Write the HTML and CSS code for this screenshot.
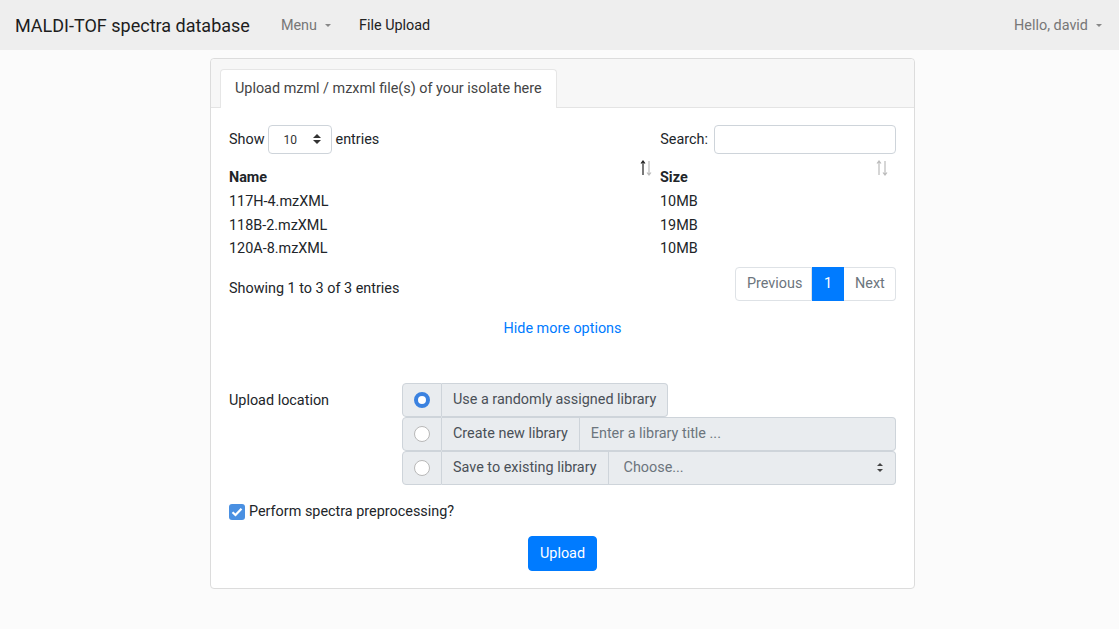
FILE: index.html
```html
<!DOCTYPE html>
<html lang="en">
<head>
<meta charset="utf-8">
<title>MALDI-TOF spectra database</title>
<link rel="stylesheet" href="styles.css">
</head>
<body>
<nav class="navbar">
  <a class="brand" href="#">MALDI-TOF spectra database</a>
  <ul class="nav-links">
    <li><a class="nav-link dropdown" href="#">Menu<span class="caret"></span></a></li>
    <li><a class="nav-link active" href="#">File Upload</a></li>
  </ul>
  <a class="nav-link dropdown user" href="#">Hello, david<span class="caret"></span></a>
</nav>

<main class="main">
  <div class="card">
    <div class="card-header">
      <div class="tab">Upload mzml / mzxml file(s) of your isolate here</div>
    </div>
    <div class="card-body">
      <div class="dt-top">
        <label class="length">Show
          <span class="select-sm">10<span class="updown"></span></span>
          entries</label>
        <label class="search">Search: <span class="search-input"></span></label>
      </div>
      <table class="dt">
        <thead>
          <tr>
            <th class="col-name">Name
              <svg class="sort" width="12" height="16" viewBox="0 0 12 16"><path d="M3 1 L3 15 M1 3.5 L3 1 L5 3.5" stroke="#222" stroke-width="1.2" fill="none"/><path d="M9 1 L9 15 M7 12.5 L9 15 L11 12.5" stroke="#bbb" stroke-width="1.2" fill="none"/></svg>
            </th>
            <th class="col-size">Size
              <svg class="sort" width="12" height="16" viewBox="0 0 12 16"><path d="M3 1 L3 15 M1 3.5 L3 1 L5 3.5" stroke="#bbb" stroke-width="1.2" fill="none"/><path d="M9 1 L9 15 M7 12.5 L9 15 L11 12.5" stroke="#bbb" stroke-width="1.2" fill="none"/></svg>
            </th>
          </tr>
        </thead>
        <tbody>
          <tr><td>117H-4.mzXML</td><td>10MB</td></tr>
          <tr><td>118B-2.mzXML</td><td>19MB</td></tr>
          <tr><td>120A-8.mzXML</td><td>10MB</td></tr>
        </tbody>
      </table>
      <div class="dt-bottom">
        <div class="info">Showing 1 to 3 of 3 entries</div>
        <ul class="pagination">
          <li class="page prev">Previous</li>
          <li class="page active">1</li>
          <li class="page next">Next</li>
        </ul>
      </div>
      <div class="more"><a href="#">Hide more options</a></div>

      <div class="form-row">
        <div class="form-label">Upload location</div>
        <div class="groups">
          <div class="input-group short">
            <span class="addon radio-addon"><span class="radio checked"></span></span>
            <span class="addon text">Use a randomly assigned library</span>
          </div>
          <div class="input-group">
            <span class="addon radio-addon"><span class="radio"></span></span>
            <span class="addon text">Create new library</span>
            <span class="field placeholder">Enter a library title ...</span>
          </div>
          <div class="input-group">
            <span class="addon radio-addon"><span class="radio"></span></span>
            <span class="addon text">Save to existing library</span>
            <span class="field select placeholder">Choose...<span class="updown"></span></span>
          </div>
        </div>
      </div>

      <label class="check"><span class="checkbox"><svg width="12" height="10" viewBox="0 0 12 10"><path d="M1.5 5.2 L4.5 8 L10.5 1.8" stroke="#fff" stroke-width="2.2" fill="none"/></svg></span>Perform spectra preprocessing?</label>

      <div class="actions"><button class="btn" type="button">Upload</button></div>
    </div>
  </div>
</main>
</body>
</html>
```

FILE: styles.css
```css
* { box-sizing: border-box; }
html, body { margin: 0; padding: 0; }
body {
  font-family: Roboto, "Liberation Sans", Arial, sans-serif;
  font-size: 14.4px;
  color: #212529;
  background: #fbfbfb;
  min-height: 629px;
}
a { text-decoration: none; }

/* navbar */
.navbar {
  height: 50px;
  background: #eeeeee;
  display: flex;
  align-items: center;
  padding: 0 15px;
}
.brand {
  font-size: 18px;
  color: #1d1d1d;
  margin-right: 23px;
}
.nav-links {
  list-style: none;
  margin: 0;
  padding: 0;
  display: flex;
  flex: 1;
}
.nav-link {
  display: inline-flex;
  align-items: center;
  padding: 8px;
  color: #777;
  font-size: 14.4px;
}
.nav-links li + li .nav-link { margin-left: 12px; }
.nav-link.active { color: #222; }
.caret {
  display: inline-block;
  width: 0; height: 0;
  margin-left: 8px;
  border-top: 3.5px solid #888;
  border-left: 3.5px solid transparent;
  border-right: 3.5px solid transparent;
  margin-top: 1px;
}
.user { padding-right: 2px; }

/* card */
.main {
  width: 705px;
  margin: 8px 0 0 210px;
}
.card {
  background: #fff;
  border: 1px solid #dcdcdc;
  border-radius: 4px;
}
.card-header {
  background: #f7f7f7;
  border-bottom: 1px solid #e4e4e4;
  padding: 10px 9px 0;
  border-radius: 4px 4px 0 0;
  display: flex;
}
.tab {
  background: #fff;
  border: 1px solid #e6e6e6;
  border-bottom: none;
  border-radius: 4px 4px 0 0;
  padding: 0 14px;
  height: 39px;
  line-height: 37px;
  color: #444;
  margin-bottom: -1px;
}
.card-body {
  padding: 17px 18px 17px 18px;
}

/* datatable top */
.dt-top {
  display: flex;
  justify-content: space-between;
  align-items: center;
  height: 28px;
}
.length, .search {
  display: flex;
  align-items: center;
  color: #212529;
}
.select-sm {
  position: relative;
  display: inline-block;
  width: 64px;
  height: 29px;
  margin: 0 4px 0 3px;
  border: 1px solid #ced4da;
  border-radius: 4px;
  font-size: 12px;
  line-height: 29px;
  padding-left: 15px;
  color: #333;
}
.updown {
  position: absolute;
  right: 10px;
  top: 50%;
  width: 8px;
  height: 10px;
  margin-top: -5px;
}
.updown::before, .updown::after {
  content: "";
  position: absolute;
  left: 0;
  border-left: 4px solid transparent;
  border-right: 4px solid transparent;
}
.updown::before { top: 0; border-bottom: 4px solid #333; }
.updown::after { bottom: 0; border-top: 4px solid #333; }
.search-input {
  display: inline-block;
  width: 182px;
  height: 29px;
  border: 1px solid #ced4da;
  border-radius: 4px;
  margin-left: 6px;
}

/* table */
.dt {
  width: 100%;
  border-collapse: collapse;
  margin-top: 4px;
}
.dt th {
  position: relative;
  text-align: left;
  font-weight: 700;
  padding: 10px 0 1px;
  line-height: 22px;
}
.col-name { width: 431px; }
.dt .sort {
  position: absolute;
  top: 3px;
  right: 8px;
}
.dt td {
  padding: 0;
  height: 23.5px;
  line-height: 23.5px;
}

.dt-bottom {
  display: flex;
  justify-content: space-between;
  align-items: center;
  margin-top: 6px;
}
.info { margin-top: 9px; }
.pagination {
  list-style: none;
  margin: 0;
  padding: 0;
  display: flex;
}
.page {
  height: 34px;
  line-height: 32px;
  border: 1px solid #dee2e6;
  padding: 0 11px;
  color: #6c757d;
  background: #fff;
}
.page.prev { border-radius: 4px 0 0 4px; width: 77px; }
.page.active {
  background: #007bff;
  border-color: #007bff;
  color: #fff;
  width: 32px;
  text-align: center;
  padding: 0;
}
.page.next { border-left: none; border-radius: 0 4px 4px 0; width: 52px; color: #6c757d; }

.more {
  text-align: center;
  margin-top: 17px;
  line-height: 22px;
}
.more a { color: #007bff; }

/* upload location */
.form-row {
  display: grid;
  grid-template-columns: 173px 1fr;
  margin-top: 43px;
}
.form-label {
  height: 34px;
  line-height: 36px;
}
.groups {
  display: flex;
  flex-direction: column;
}
.input-group {
  display: flex;
  height: 34px;
}
.input-group.short { align-self: flex-start; }
.addon, .field {
  background: #e9ecef;
  border: 1px solid #ced4da;
  color: #495057;
  display: flex;
  align-items: center;
  padding: 0 11px;
  white-space: nowrap;
}
.addon + .addon, .addon + .field { border-left: none; }
.radio-addon {
  width: 40px;
  justify-content: center;
  padding: 0;
  border-radius: 4px 0 0 4px;
}
.input-group.short .text { border-radius: 0 4px 4px 0; }
.field {
  flex: 1;
  border-radius: 0 4px 4px 0;
  position: relative;
}
.placeholder { color: #6c757d; }
.select { padding-left: 15px; }
.select .updown { right: 11px; width: 7px; height: 9px; margin-top: -4.5px; }
.select .updown::before { border-left-width: 3.5px; border-right-width: 3.5px; border-bottom: 3.5px solid #444; }
.select .updown::after { border-left-width: 3.5px; border-right-width: 3.5px; border-top: 3.5px solid #444; }
.radio {
  width: 16px;
  height: 16px;
  border-radius: 50%;
  border: 1px solid #b8b8b8;
  background: #fff;
  display: inline-block;
}
.radio.checked {
  border: 4.5px solid #3b82e0;
  background: #fff;
}

/* checkbox */
.check {
  display: flex;
  align-items: center;
  margin-top: 16px;
  line-height: 22px;
}
.checkbox {
  width: 16px;
  height: 16px;
  background: #4a90e2;
  border-radius: 3px;
  display: inline-flex;
  align-items: center;
  justify-content: center;
  margin-right: 4px;
}

.actions {
  display: flex;
  justify-content: center;
  margin-top: 13px;
}
.btn {
  font-family: inherit;
  font-size: 14.4px;
  background: #007bff;
  color: #fff;
  border: 1px solid #007bff;
  border-radius: 4px;
  height: 35px;
  padding: 0 11px;
  cursor: pointer;
}
```
